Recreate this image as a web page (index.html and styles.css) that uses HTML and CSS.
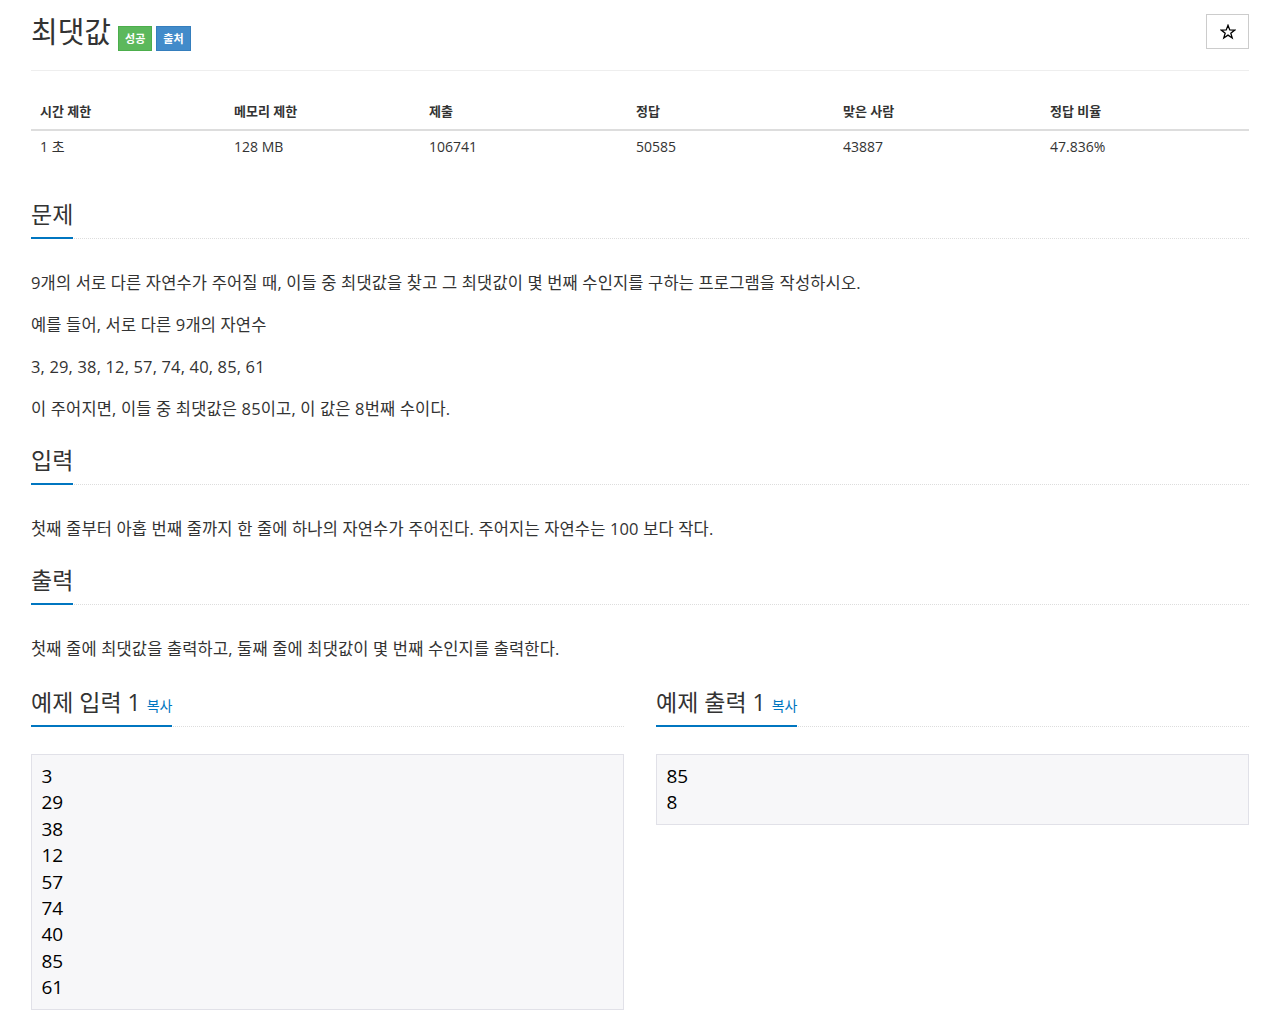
FILE: index.html
```html
<!DOCTYPE html>
<html lang="ko">
<head>
<meta charset="utf-8">
<title>최댓값</title>
<link rel="stylesheet" href="styles.css">
</head>
<body>
<div class="container">
  <div class="page-header">
    <h1 class="title">최댓값 <span class="label label-success">성공</span><span class="label label-primary">출처</span></h1>
    <button class="star-btn" type="button" aria-label="즐겨찾기"><svg class="star-icon" viewBox="0 0 20 20" width="16" height="16"><path d="M10 1.6 L12.2 7.4 L18.4 7.6 L13.5 11.4 L15.3 17.4 L10 13.9 L4.7 17.4 L6.5 11.4 L1.6 7.6 L7.8 7.4 Z" fill="none" stroke="#000" stroke-width="1.6" stroke-linejoin="miter"/></svg></button>
  </div>

  <table class="info-table">
    <thead>
      <tr>
        <th class="c1">시간 제한</th>
        <th class="c2">메모리 제한</th>
        <th class="c3">제출</th>
        <th class="c4">정답</th>
        <th class="c5">맞은 사람</th>
        <th class="c6">정답 비율</th>
      </tr>
    </thead>
    <tbody>
      <tr>
        <td>1 초 </td>
        <td>128 MB</td>
        <td>106741</td>
        <td>50585</td>
        <td>43887</td>
        <td>47.836%</td>
      </tr>
    </tbody>
  </table>

  <section class="section">
    <div class="headline"><h2>문제</h2></div>
    <div class="text">
      <p>9개의 서로 다른 자연수가 주어질 때, 이들 중 최댓값을 찾고 그 최댓값이 몇 번째 수인지를 구하는 프로그램을 작성하시오.</p>
      <p>예를 들어, 서로 다른 9개의 자연수</p>
      <p>3, 29, 38, 12, 57, 74, 40, 85, 61</p>
      <p>이 주어지면, 이들 중 최댓값은 85이고, 이 값은 8번째 수이다.</p>
    </div>
  </section>

  <section class="section">
    <div class="headline"><h2>입력</h2></div>
    <div class="text">
      <p>첫째 줄부터 아홉 번째 줄까지 한 줄에 하나의 자연수가 주어진다. 주어지는 자연수는 100 보다 작다.</p>
    </div>
  </section>

  <section class="section">
    <div class="headline"><h2>출력</h2></div>
    <div class="text">
      <p>첫째 줄에 최댓값을 출력하고, 둘째 줄에 최댓값이 몇 번째 수인지를 출력한다.</p>
    </div>
  </section>

  <div class="samples">
    <section class="sample">
      <div class="headline"><h2>예제 입력 1 <a class="copy" href="#">복사</a></h2></div>
      <pre class="sample-data">3
29
38
12
57
74
40
85
61</pre>
    </section>
    <section class="sample">
      <div class="headline"><h2>예제 출력 1 <a class="copy" href="#">복사</a></h2></div>
      <pre class="sample-data">85
8</pre>
    </section>
  </div>
</div>
</body>
</html>
```

FILE: styles.css
```css
* { box-sizing: border-box; }
html, body {
  margin: 0;
  padding: 0;
  background: #fff;
}
body {
  font-family: "Open Sans", "Noto Sans CJK KR", sans-serif;
  color: #333;
  font-size: 14px;
}
.container {
  padding: 0 31px;
}
.page-header {
  display: flex;
  justify-content: space-between;
  align-items: flex-start;
  padding-top: 12px;
  padding-bottom: 18px;
  border-bottom: 1px solid #eee;
}
.title {
  margin: 0;
  font-size: 29px;
  font-weight: 400;
  line-height: 40px;
  color: #333;
  display: flex;
  align-items: flex-start;
}
.label {
  display: inline-block;
  height: 25px;
  line-height: 23px;
  padding: 0 6px;
  font-size: 11px;
  font-weight: 700;
  color: #fff;
  margin-left: 4px;
  margin-top: 14px;
}
.label-success {
  background: #5cb85c;
  margin-left: 7px;
  border: 1px solid #4cae4c;
}
.label-primary {
  background: #428bca;
  border: 1px solid #357ebd;
}
.star-btn {
  width: 43px;
  height: 35px;
  margin-top: 2px;
  border: 1px solid #ccc;
  background: #fff;
  padding: 0;
  display: flex;
  align-items: center;
  justify-content: center;
}
.star-icon {
  display: block;
}
.info-table {
  width: 100%;
  border-collapse: collapse;
  table-layout: fixed;
  margin-top: 22px;
  margin-bottom: 32px;
}
.info-table th, .info-table td {
  text-align: left;
  padding: 8px 9px;
  line-height: 20px;
  font-size: 13px;
}
.info-table td {
  padding-top: 6px;
  font-size: 14px;
}
.info-table th {
  font-weight: 700;
  border-bottom: 2px solid #ddd;
}
.c1 { width: 194px; }
.c2 { width: 195px; }
.c3 { width: 207px; }
.c4 { width: 207px; }
.c5 { width: 207px; }
.c6 { width: 208px; }
.headline {
  border-bottom: 1px dotted #ddd;
  margin-top: 21px;
}
.headline h2 {
  display: inline-block;
  margin: 0 0 -1px 0;
  font-size: 23px;
  font-weight: 400;
  line-height: 34px;
  padding-bottom: 6px;
  border-bottom: 2px solid #0076c0;
  color: #333;
}
.section:first-of-type .headline {
  margin-top: 0;
}
.text {
  padding-top: 30px;
}
.text p {
  margin: 0 0 15px;
  font-size: 16.5px;
  letter-spacing: 0.15px;
  line-height: 27px;
}
.samples {
  display: grid;
  grid-template-columns: 1fr 1fr;
  column-gap: 32px;
  margin-top: 23px;
}
.sample .headline {
  margin-top: 0;
}
.copy {
  font-size: 14px;
  line-height: 1;
  color: #0076c0;
  text-decoration: none;
  margin-left: 0;
}
.sample-data {
  margin: 27px 0 0;
  padding: 8px 9.5px;
  background: #f7f7f9;
  border: 1px solid #e1e1e8;
  font-family: "Open Sans", "Noto Sans", sans-serif;
  font-size: 19px;
  line-height: 26.4px;
  color: #000;
}
```
